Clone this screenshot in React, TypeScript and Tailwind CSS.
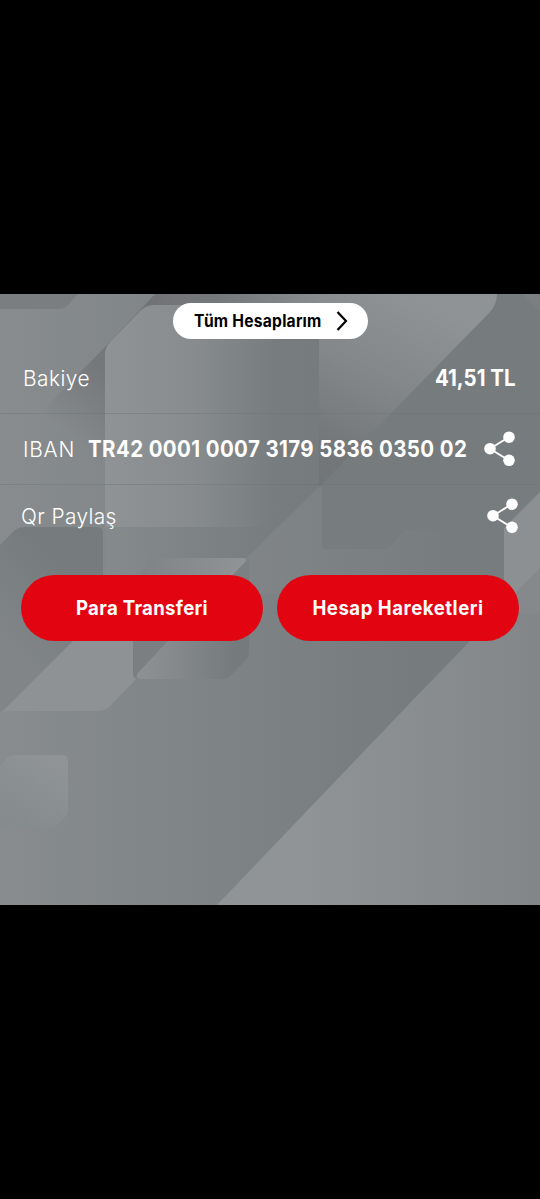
import React from 'react';

const ShareIcon: React.FC = () => (
    <svg width="31" height="36" viewBox="0 0 31 36" className="shrink-0" aria-hidden="true">
        <path d="M25 6 L6 17.7 L25 29.5" fill="none" stroke="#fff" strokeWidth="1.9" />
        <circle cx="25" cy="6.2" r="5.8" fill="#fff" />
        <circle cx="6" cy="17.7" r="5.8" fill="#fff" />
        <circle cx="25" cy="29.3" r="5.8" fill="#fff" />
    </svg>
);

const CardBackground: React.FC = () => (
    <svg
        viewBox="0 0 540 611"
        preserveAspectRatio="none"
        className="absolute inset-0 w-full h-full"
        aria-hidden="true"
    >
        <defs>
            <linearGradient id="base" gradientUnits="userSpaceOnUse" x1="0" y1="0" x2="420" y2="0">
                <stop offset="0" stopColor="#888c8e" />
                <stop offset="1" stopColor="#767b7d" />
            </linearGradient>
            <linearGradient id="corner" gradientUnits="userSpaceOnUse" x1="300" y1="0" x2="540" y2="0">
                <stop offset="0" stopColor="#909496" />
                <stop offset="1" stopColor="#828688" />
            </linearGradient>
            <linearGradient id="panel" gradientUnits="userSpaceOnUse" x1="105" y1="0" x2="319" y2="0">
                <stop offset="0" stopColor="#8f9395" />
                <stop offset="0.4" stopColor="#888c8e" />
                <stop offset="0.8" stopColor="#777c7e" />
                <stop offset="1" stopColor="#767b7d" />
            </linearGradient>
            <linearGradient id="strip" gradientUnits="userSpaceOnUse" x1="145" y1="0" x2="330" y2="0">
                <stop offset="0" stopColor="#717276" />
                <stop offset="0.4" stopColor="#76797b" />
                <stop offset="1" stopColor="#8a8e90" />
            </linearGradient>
            <linearGradient id="shade" gradientUnits="userSpaceOnUse" x1="105" y1="75" x2="60" y2="135">
                <stop offset="0" stopColor="#74787a" />
                <stop offset="1" stopColor="#74787a" stopOpacity="0" />
            </linearGradient>
            <linearGradient id="beam" gradientUnits="userSpaceOnUse" x1="410" y1="0" x2="335" y2="160">
                <stop offset="0" stopColor="#8f9395" />
                <stop offset="0.5" stopColor="#848789" />
                <stop offset="1" stopColor="#737679" />
            </linearGradient>
            <linearGradient id="lower" gradientUnits="userSpaceOnUse" x1="105" y1="0" x2="310" y2="0">
                <stop offset="0" stopColor="#858a8c" />
                <stop offset="1" stopColor="#747a7c" />
            </linearGradient>
            <linearGradient id="middle" gradientUnits="userSpaceOnUse" x1="240" y1="0" x2="460" y2="0">
                <stop offset="0" stopColor="#818587" />
                <stop offset="1" stopColor="#777c7e" />
            </linearGradient>
            <linearGradient id="dark" gradientUnits="userSpaceOnUse" x1="75" y1="290" x2="10" y2="350">
                <stop offset="0" stopColor="#767b7d" />
                <stop offset="1" stopColor="#818587" />
            </linearGradient>
            <linearGradient id="ribbon" gradientUnits="userSpaceOnUse" x1="145" y1="0" x2="247" y2="0">
                <stop offset="0" stopColor="#808486" />
                <stop offset="1" stopColor="#909496" />
            </linearGradient>
            <linearGradient id="fold" gradientUnits="userSpaceOnUse" x1="137" y1="0" x2="235" y2="0">
                <stop offset="0" stopColor="#8d9193" />
                <stop offset="0.35" stopColor="#868a8c" />
                <stop offset="1" stopColor="#757a7c" />
            </linearGradient>
            <linearGradient id="tile" gradientUnits="userSpaceOnUse" x1="60" y1="470" x2="25" y2="530">
                <stop offset="0" stopColor="#909496" />
                <stop offset="1" stopColor="#868b8d" />
            </linearGradient>
        </defs>

        <rect width="540" height="611" fill="url(#base)" />

        {/* top left */}
        <path d="M0 0 H78 L67 12 Q64 15 60 15 H0 Z" fill="#7a7e80" />
        <path d="M105 53 L0 160 V233 H105 Z" fill="url(#shade)" />

        {/* top right */}
        <path d="M155 0 H330 V60 H105 V53 Z" fill="url(#strip)" />
        <path d="M319 0 H540 V200 H319 Z" fill="#767b7d" />
        <path d="M522 0 H540 V18 Z" fill="#7b7f81" />
        <path d="M105 61 Q105 53 110 48 L140 17 Q146 11 154 11 H319 V233 H105 Z" fill="url(#panel)" />
        <path d="M319 0 H497 Q497 11 489 19 L319 193 Z" fill="url(#beam)" />

        {/* middle */}
        <path d="M105 233 H277 L249 262 V290 H105 Z" fill="url(#lower)" />
        <path d="M319 193 H504 V300 H240 V271 Z" fill="url(#middle)" />
        <path d="M322 190 H540 V240 L504 300 H440 V236 H405 L390 252 Q387 255 382 255 H326 Q322 255 322 250 Z" fill="#777c7e" />

        {/* bottom right */}
        <path d="M504 234 L540 198 V320 H480 L504 296 Z" fill="#8c9092" />
        <path d="M540 274 L494 320 H540 Z" fill="#85898b" />
        <path d="M217 611 L413 406 L470 347 L496 320 H540 V611 Z" fill="url(#corner)" />

        {/* bottom left */}
        <path d="M0 251 L14 237 Q18 233 25 233 H97 Q103 233 103 239 V320 L73 347 L6 416 L0 418 Z" fill="url(#dark)" />
        <path d="M0 420 L73 347 L100 320 H160 L138 383 L110 412 Q105 417 98 417 H8 Q3 417 0 420 Z" fill="#8e9294" />
        <path d="M133 300 H249 V357 Q249 363 245 367 L230 382 Q227 385 222 385 H139 Q133 385 133 379 Z" fill="#7b7f81" />
        <path d="M235 278 L249 264 V300 H235 Z" fill="#7b8082" />
        <path d="M150 264 H243 Q248 264 245 268 L230 284 H140 Z" fill="url(#ribbon)" />
        <path d="M180 334 H249 V357 Q249 363 245 367 L230 382 Q227 385 222 385 H140 Q134 384 138 379 Z" fill="url(#fold)" />
        <path d="M0 472 L7 464 Q10 461 15 461 H62 Q68 461 68 467 V516 Q68 520 65 523 L58 530 Q54 534 48 534 H0 Z" fill="url(#tile)" />
    </svg>
);

const App: React.FC = () => {
    return (
        <div className="w-full h-[1199px] bg-black pt-[294px] font-['Inter',sans-serif] text-white overflow-hidden">
            <div className="relative h-[611px] overflow-hidden">
                <CardBackground />
                <div className="relative flex flex-col pt-[9px]">
                    <button className="self-center flex items-center justify-between w-[195px] h-9 rounded-full bg-white text-black pl-[21px] pr-5">
                        <span className="w-[128px] pt-0.5 text-[17px] font-bold tracking-[0.25px] whitespace-nowrap origin-left scale-x-[0.92]">Tüm Hesaplarım</span>
                        <svg width="12" height="20" viewBox="0 0 12 20" aria-hidden="true">
                            <path d="M1.5 1 L10 10 L1.5 19" fill="none" stroke="#000" strokeWidth="2.2" />
                        </svg>
                    </button>

                    <div className="flex items-center justify-between h-[75px] pt-1 pl-[23px] pr-6 border-b border-[#6c7072]/40">
                        <span className="text-[22px] font-light tracking-[0.5px] whitespace-nowrap origin-left scale-x-[0.95]">Bakiye</span>
                        <span className="text-[22.5px] font-bold whitespace-nowrap origin-right scale-x-[0.91]">41,51 TL</span>
                    </div>

                    <div className="flex items-center h-[71px] pl-[23px] pr-[25px] border-b border-[#6c7072]/40">
                        <span className="w-[65px] shrink-0 text-[22px] font-light tracking-[0.8px] whitespace-nowrap origin-left scale-x-[0.95]">IBAN</span>
                        <span className="flex-1 min-w-0 text-[22.5px] font-bold tracking-[0.43px] whitespace-nowrap origin-left scale-x-[0.91]">
                            <span className="inline-block">TR42 0001 0007 3179 5836 0350 02</span>
                        </span>
                        <ShareIcon />
                    </div>

                    <div className="flex items-center justify-between h-[62px] pl-[21px] pr-[22px]">
                        <span className="text-[22px] font-light tracking-[0.4px] whitespace-nowrap origin-left scale-x-[0.95]">Qr Paylaş</span>
                        <ShareIcon />
                    </div>

                    <div className="flex gap-[14px] px-[21px] mt-7">
                        <button className="flex-1 h-[66px] rounded-full bg-[#e30412]">
                            <span className="inline-block text-[20px] font-bold tracking-[0.35px] whitespace-nowrap scale-x-[0.93]">Para Transferi</span>
                        </button>
                        <button className="flex-1 h-[66px] rounded-full bg-[#e30412]">
                            <span className="inline-block text-[20px] font-bold tracking-[0.55px] whitespace-nowrap scale-x-[0.93]">Hesap Hareketleri</span>
                        </button>
                    </div>
                </div>
            </div>
        </div>
    );
};

export default App;
